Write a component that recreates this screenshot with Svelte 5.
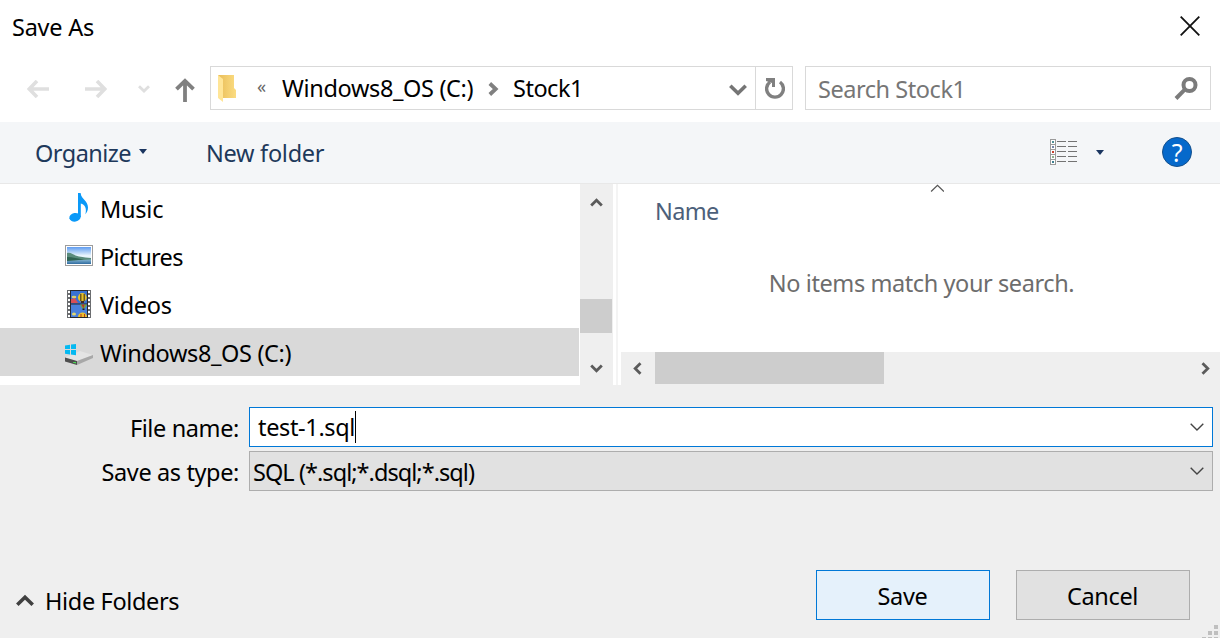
<script>
  const places = [
    { id: 'music', label: 'Music' },
    { id: 'pictures', label: 'Pictures' },
    { id: 'videos', label: 'Videos' },
    { id: 'drive', label: 'Windows8_OS (C:)', selected: true }
  ];
  const viewRows = [
    { y: 0, c: '#4e8f95' },
    { y: 5, c: '#7585a8' },
    { y: 10, c: '#c8402c' },
    { y: 15, c: '#8fb08c' },
    { y: 20, c: '#3c7f91' }
  ];
  const holes = [1, 5, 9, 13, 17, 21, 25];
</script>

<div class="dialog">
  <header class="title">
    <span class="t-title">Save As</span>
    <svg class="close" width="20" height="20" viewBox="0 0 20 20"><path d="M.7.7 19.3 19.3M19.3.7.7 19.3" stroke="#111" stroke-width="1.8" fill="none" /></svg>
  </header>

  <nav class="address-row">
    <div class="arrows">
      <svg width="22" height="18" viewBox="0 0 22 18" class="off a-back"><path d="M10 1 2.2 9 10 17M2 9H22" stroke-width="3.6" /></svg>
      <svg width="22" height="18" viewBox="0 0 22 18" class="off a-fwd"><path d="M12 1 19.8 9 12 17M20 9H0" stroke-width="3.6" /></svg>
      <svg width="12" height="8" viewBox="0 0 12 8" class="off a-recent"><path d="M1 1.2 6 6 11 1.2" stroke-width="2.8" /></svg>
      <svg width="20" height="24" viewBox="0 0 20 24" class="a-up"><path d="M1.5 11.2 10 2.8 18.5 11.2M10 3V24" stroke="#808080" stroke-width="3.8" fill="none" /></svg>
    </div>
    <div class="path">
      <svg class="folder" width="20" height="28" viewBox="0 0 20 28">
        <defs>
          <linearGradient id="fold" x1="0" x2="1"><stop offset="0" stop-color="#e9bd58" /><stop offset="1" stop-color="#fbdc82" /></linearGradient>
        </defs>
        <path d="M1 1H17V14L19 16V24H5Z" fill="url(#fold)" />
        <path d="M1 1 6 5V28L1 24Z" fill="#ffe597" />
      </svg>
      <span class="laquo">«</span>
      <span class="t-crumb1">Windows8_OS (C:)</span>
      <svg class="sep" width="11" height="14" viewBox="0 0 11 14"><path d="M1.8 1.5 7.7 7 1.8 12.5" stroke="#808080" stroke-width="3.8" fill="none" /></svg>
      <span class="t-crumb2">Stock1</span>
      <svg class="drop" width="18" height="13" viewBox="0 0 18 13"><path d="M1.3 1.8 9 9.3 16.7 1.8" stroke="#757575" stroke-width="3.6" fill="none" /></svg>
      <div class="refresh">
        <svg width="20" height="21" viewBox="0 0 20 21"><path d="M15 4A8.4 8.4 0 1 1 5 4" stroke="#808080" stroke-width="3.4" fill="none" /><path d="M1 0H10V9H7V5L1 3Z" fill="#808080" /></svg>
      </div>
    </div>
    <div class="search">
      <span class="t-search">Search Stock1</span>
      <svg width="24" height="24" viewBox="0 0 24 24"><circle cx="15.5" cy="8" r="6" stroke="#7b7b7b" stroke-width="4" fill="none" /><path d="M11.2 12.2 2 21.5" stroke="#7b7b7b" stroke-width="4" /></svg>
    </div>
  </nav>

  <div class="toolbar">
    <span class="t-organize">Organize</span>
    <svg class="tri" width="8" height="5" viewBox="0 0 8 5"><path d="M0 0H8L4 5Z" fill="#1a3560" /></svg>
    <span class="t-newfolder">New folder</span>
    <div class="tools">
      <svg class="view" width="28" height="26" viewBox="0 0 28 26" shape-rendering="crispEdges">
        {#each viewRows as r}
          <rect x=".5" y={r.y + 0.5} width="5" height="5" fill="#fff" stroke="#9b9b9b" />
          <rect x="2" y={r.y + 2} width="2" height="2" fill={r.c} />
          <rect x="7" y={r.y + 2} width="9" height="1" fill="#737373" />
          <rect x="18" y={r.y + 2} width="9" height="1" fill="#737373" />
        {/each}
      </svg>
      <svg class="tri2" width="8" height="5" viewBox="0 0 8 5"><path d="M0 0H8L4 5Z" fill="#1a3560" /></svg>
      <span class="help">?</span>
    </div>
  </div>

  <main>
    <ul class="tree">
      {#each places as p}
        <li class:selected={p.selected}>
          <span class="icon">
            {#if p.id === 'music'}
              <svg width="28" height="30" viewBox="0 0 28 30">
                <ellipse cx="10" cy="24.3" rx="5.7" ry="4.3" transform="rotate(-10 10 24.3)" fill="#0a99f8" />
                <path d="M13 0H15.6C16.2 6.5 23 7.5 23 14.5C23 17.5 21.6 20 20.4 21.2C22 15.5 19.8 11.5 15.8 10.6V24H13Z" fill="#0a99f8" />
              </svg>
            {:else if p.id === 'pictures'}
              <svg width="28" height="22" viewBox="0 0 28 22">
                <defs>
                  <linearGradient id="sky" x2="0" y2="1"><stop offset="0" stop-color="#5f9cf0" /><stop offset=".5" stop-color="#e7f4fc" /></linearGradient>
                  <linearGradient id="sea" x2="0" y2="1"><stop offset="0" stop-color="#a5d0e4" /><stop offset="1" stop-color="#2f6b9f" /></linearGradient>
                </defs>
                <rect x=".5" y=".5" width="27" height="20" fill="#fff" stroke="#9c9c9c" />
                <rect x="2" y="2" width="24" height="17" fill="url(#sky)" />
                <rect x="2" y="13" width="24" height="6" fill="url(#sea)" />
                <path d="M2 8C6 7 9 10.5 14 11.5S22 12.5 26 13V14.5L18 15 2 15.5Z" fill="#5a8c7c" />
                <path d="M2 12C8 12 13 13.5 19 14.5L2 16Z" fill="#2f6352" />
              </svg>
            {:else if p.id === 'videos'}
              <svg width="28" height="28" viewBox="0 0 28 28">
                <rect x="2" width="24" height="28" fill="#6b6d70" />
                <rect x="5" width="18" height="28" fill="#26282c" />
                <rect x="6" y="1" width="16" height="12.5" fill="#3972d2" />
                <rect x="6" y="14.5" width="16" height="12.5" fill="#4a80db" />
                {#each holes as y}
                  <rect x="3" {y} width="2" height="2" fill="#fff" />
                  <rect x="23" {y} width="2" height="2" fill="#fff" />
                {/each}
                <path d="M6 9 10 8 13 13H6Z" fill="#d94f55" />
                <ellipse cx="9" cy="7" rx="2.4" ry="1.3" fill="#d8cf6b" />
                <circle cx="17.3" cy="7.5" r="4.4" fill="#e8c126" />
                <path d="M15 4h1.5v7H15zM18.5 4H20v7h-1.5z" fill="#6d5a20" />
                <path d="M16 11h3v2h-3z" fill="#412c24" />
                <path d="M15 14.5H22L19.5 18.5H17.3Z" fill="#71a641" />
                <path d="M16.5 14.5h3l-1 4Z" fill="#c03026" />
                <rect x="17.5" y="18.5" width="2" height="1.5" fill="#24231f" />
                <ellipse cx="9" cy="24" rx="2" ry="1.5" fill="#e3d86e" />
                <path d="M13 27C13 21 22 21 22 27Z" fill="#edc12b" />
                <path d="M15.5 24h1v3h-1zM19 24h1v3h-1z" fill="#b33b25" />
              </svg>
            {:else}
              <svg class="drv" width="30" height="24" viewBox="0 0 30 24">
                <path d="M0 14.5 15 8 28 12 12 18Z" fill="#e4e4e4" />
                <path d="M0 14.5 12 18V22L0 18.5Z" fill="#4e4e4e" />
                <path d="M12 18 28 12V15L12 22Z" fill="#a8a8a8" />
                <path d="M8 19h3v1.6L8 19.8Z" fill="#4cdb55" />
                <path d="M0 2.5 5 1.8V6H0ZM6 1.6 11 .9V6H6ZM0 7H5V11.4L0 10.8ZM6 7H11V12.2L6 11.5Z" fill="#05b9f1" />
              </svg>
            {/if}
          </span>
          <span class="t-{p.id}">{p.label}</span>
        </li>
      {/each}
    </ul>
    <div class="vscroll">
      <svg width="13" height="10" viewBox="0 0 13 10"><path d="M1.2 8.5 6.5 3.2 11.8 8.5" stroke="#5b5b5b" stroke-width="2.8" fill="none" /></svg>
      <div class="vthumb"></div>
      <svg class="vdown" width="13" height="10" viewBox="0 0 13 10"><path d="M1.2 1.5 6.5 6.8 11.8 1.5" stroke="#5b5b5b" stroke-width="2.8" fill="none" /></svg>
    </div>
    <div class="split"></div>
    <section class="files">
      <div class="filebody">
        <svg class="sort" width="14" height="8" viewBox="0 0 14 8"><path d="M1.1 7.5 7.5 1.3 13.9 7.5" stroke="#555" stroke-width="1.2" fill="none" /></svg>
        <span class="t-name">Name</span>
        <p><span class="t-empty">No items match your search.</span></p>
      </div>
      <div class="hscroll">
        <svg width="10" height="13" viewBox="0 0 10 13"><path d="M8.5 1.2 3.2 6.5 8.5 11.8" stroke="#5b5b5b" stroke-width="2.8" fill="none" /></svg>
        <div class="hthumb"></div>
        <svg class="hright" width="10" height="13" viewBox="0 0 10 13"><path d="M1.5 1.2 6.8 6.5 1.5 11.8" stroke="#5b5b5b" stroke-width="2.8" fill="none" /></svg>
      </div>
    </section>
  </main>

  <footer>
    <div class="field">
      <span class="label"><span class="t-filename">File name:</span></span>
      <div class="box input">
        <span class="t-value">test-1.sql</span><i class="caret"></i>
        <svg width="14" height="8" viewBox="0 0 14 8"><path d="M.7.8 7 7 13.3.8" stroke="#444" stroke-width="1.4" fill="none" /></svg>
      </div>
    </div>
    <div class="field">
      <span class="label"><span class="t-savetype">Save as type:</span></span>
      <div class="box select">
        <span class="t-type">SQL (*.sql;*.dsql;*.sql)</span>
        <svg width="14" height="8" viewBox="0 0 14 8"><path d="M.7.8 7 7 13.3.8" stroke="#444" stroke-width="1.4" fill="none" /></svg>
      </div>
    </div>
    <div class="actions">
      <div class="hide">
        <svg width="18" height="13" viewBox="0 0 18 13"><path d="M1.3 10.8 9 3.3 16.7 10.8" stroke="#404040" stroke-width="3.6" fill="none" /></svg>
        <span class="t-hide">Hide Folders</span>
      </div>
      <button class="primary"><span class="t-save">Save</span></button>
      <button><span class="t-cancel">Cancel</span></button>
    </div>
    <svg class="grip" width="16" height="14" viewBox="0 0 16 14" fill="#bfbfbf"><path d="M12 1h4v4h-4zM6 7h4v4H6zM12 7h4v4h-4zM0 13h4v1H0zM6 13h4v1H6zM12 13h4v1h-4z" /></svg>
  </footer>
</div>

<style>
  :global(body) { margin: 0; background: #fff; }
  .dialog {
    width: 1220px; height: 638px; overflow: hidden; display: flex; flex-direction: column;
    background: #fff; color: #000; font: 23.5px/32px "Noto Sans", "Open Sans", sans-serif; white-space: nowrap;
    letter-spacing: -.35px;
  }
  svg { display: block; flex: none; }
  .title { height: 66px; display: flex; justify-content: space-between; padding: 11px 20px 0 12px; box-sizing: border-box; }
  .t-title { letter-spacing: -.25px; }
  .close { margin-top: 5px; }

  .address-row { height: 44px; display: flex; flex: none; }
  .arrows { width: 210px; display: flex; }
  .off { stroke: #dfdfdf; fill: none; }
  .a-back { margin: 14px 0 0 27px; }
  .a-fwd { margin: 14px 0 0 36px; }
  .a-recent { margin: 19px 0 0 31px; }
  .a-up { margin: 12px 0 0 25px; }
  .path, .search { border: 1px solid #d9d9d9; box-sizing: border-box; display: flex; align-items: center; }
  .path { width: 583px; padding-left: 6px; }
  .folder { margin-top: -1px; }
  .laquo { font-size: 18px; color: #666; margin: -5px 0 0 20px; width: 16px; }
  .t-crumb1 { width: 192px; margin-left: 9px; }
  .sep { margin: 2px 0 0 14px; }
  .t-crumb2 { margin-left: 14px; letter-spacing: -.5px; }
  .drop { margin: 4px 8px 0 auto; }
  .refresh { border-left: 1px solid #d9d9d9; width: 36px; height: 42px; display: flex; align-items: center; justify-content: center; }
  .refresh svg { margin-left: 2px; }
  .search { width: 406px; margin-left: 12px; padding: 0 12px 0 12px; justify-content: space-between; color: #767676; }
  .search svg { margin-top: 1px; }
  .t-search { padding-top: 2px; letter-spacing: -.45px; }

  .toolbar { height: 61px; margin-top: 12px; background: #f4f6f8; border-bottom: 1px solid #e8e8e8; display: flex; flex: none; align-items: center; padding-left: 35px; color: #1e395b; }
  .t-organize { width: 96px; letter-spacing: -.55px; }
  .tri { margin: -2px 0 0 8px; }
  .t-newfolder { margin-left: 59px; letter-spacing: -.28px; }
  .tools { margin: -2px 0 0 auto; display: flex; align-items: center; padding-right: 28px; }
  .tri2 { margin: 1px 58px 0 18px; }
  .help { width: 28px; height: 28px; line-height: 28px; border: 1px solid #14508d; border-radius: 50%; background: #0669cb; color: #fff; text-align: center; font-size: 25px; }

  main { height: 201px; display: flex; flex: none; }
  .tree { list-style: none; margin: 0; padding: 0; width: 580px; }
  .tree li { height: 48px; width: 579px; display: flex; align-items: center; box-sizing: border-box; padding: 2px 0 0 65px; }
  .t-pictures { letter-spacing: -.7px; }
  .t-music, .t-videos { letter-spacing: -.25px; }
  .selected { background: #d9d9d9; }
  .icon { width: 35px; margin-top: -2px; }
  .drv { margin-top: 6px; }
  .vscroll { width: 33px; background: #efefef; display: flex; flex-direction: column; }
  .vscroll svg { margin: 13px 0 0 10px; }
  .vthumb { margin-top: 92px; width: 32px; height: 34px; background: #cdcdcd; }
  .vscroll .vdown { margin-top: 31px; }
  .split { width: 2px; margin: 0 3px; background: #f4f4f4; }
  .files { flex: 1; }
  .filebody { height: 168px; display: flex; flex-direction: column; }
  .sort { margin: 0 0 0 309px; }
  .t-name { color: #4c607a; margin: 3px 0 0 34px; letter-spacing: -.7px; }
  .filebody p { margin: 40px 0 0; padding-left: 2px; text-align: center; color: #6d6d6d; letter-spacing: -.41px; }
  .hscroll { height: 33px; background: #efefef; display: flex; align-items: flex-start; }
  .hscroll svg { margin: 10px 0 0 11px; }
  .hthumb { width: 229px; height: 32px; margin-left: 13px; background: #cdcdcd; }
  .hscroll .hright { margin-left: auto; margin-right: 9px; }

  footer { flex: 1; background: #efefef; padding-top: 22px; position: relative; }
  .field { display: flex; margin-bottom: 4px; }
  .label { width: 249px; padding: 5px 10px 0 0; box-sizing: border-box; text-align: right; letter-spacing: -.38px; }
  .box { width: 964px; height: 40px; border: 1px solid #adadad; box-sizing: border-box; display: flex; align-items: center; background: #e1e1e1; padding: 0 8px 0 3px; }
  .input { background: #fff; border-color: #0078d7; padding-left: 8px; }
  .select span { padding-top: 2px; letter-spacing: -.95px; }
  .box svg { margin-left: auto; }
  .caret { width: 1px; height: 32px; background: #000; }
  .actions { display: flex; margin-top: 79px; }
  .hide { width: 816px; display: flex; align-items: flex-start; }
  .hide svg { margin: 24px 11px 0 16px; }
  .hide span { margin-top: 15px; }
  button { width: 174px; height: 50px; border: 1px solid #adadad; background: #e1e1e1; font: inherit; letter-spacing: inherit; color: #000; padding: 2px 1px 0 0; margin-right: 26px; box-sizing: border-box; }
  .primary { background: #e5f1fb; border-color: #0078d7; }
  .grip { position: absolute; right: 2px; bottom: 0; }
</style>
